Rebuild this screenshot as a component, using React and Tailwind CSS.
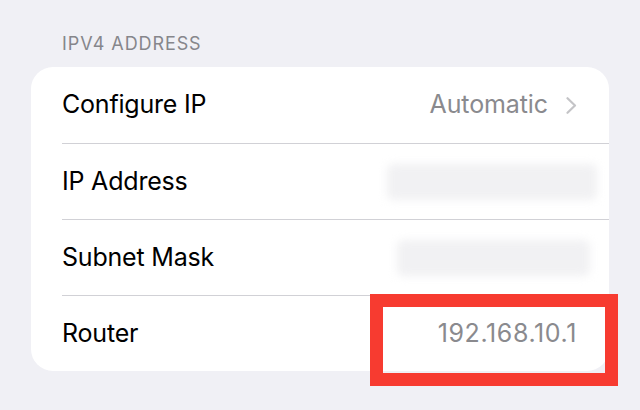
const rows = [
    { label: 'Configure IP', value: 'Automatic', chevron: true },
    { label: 'IP Address', blur: 'w-[210px] mr-[-20px]' },
    { label: 'Subnet Mask', blur: 'w-[193px] mr-[-13px]' },
    { label: 'Router', value: '192.168.10.1', highlight: true },
];

export default function App() {
    return (
        <div className="w-[640px] h-[410px] bg-[#f0f0f5] pt-[35px] pl-[31px] pr-[31px] overflow-hidden" style={{ fontFamily: 'Inter, "Liberation Sans", sans-serif' }}>
            <div className="pl-[31px] text-[18px] text-[#86868b] leading-none tracking-[0.9px] h-[32px]">IPV4 ADDRESS</div>
            <div className="bg-white rounded-[22px] pl-[31px]">
                {rows.map((row, i) => (
                    <div key={row.label} className={`relative h-[76px] flex items-center justify-between pr-[32px] ${i > 0 ? 'border-t border-[#d1d1d6]' : ''}`}>
                        <span className="text-[25px] text-black tracking-[-0.2px]">{row.label}</span>
                        {row.value && (
                            <span className={`flex items-center text-[25px] text-[#8a8a8e] ${row.highlight ? 'tracking-[0.6px]' : 'tracking-[-0.1px]'}`}>
                                {row.value}
                                {row.chevron && (
                                    <svg width="11" height="17" viewBox="0 0 11 17" className="ml-[18px]" fill="none">
                                        <path d="M1.5 1.2 L9 8.5 L1.5 15.8" stroke="#c4c4c7" strokeWidth="2.2" strokeLinecap="round" strokeLinejoin="round" />
                                    </svg>
                                )}
                            </span>
                        )}
                        {row.blur && (
                            <div className={`h-[36px] ${row.blur} bg-[#f1f1f3] rounded-md blur-[4px]`} />
                        )}
                        {row.highlight && (
                            <div className="absolute left-[308px] top-[-2px] w-[248px] h-[92px] border-[13px] border-[#f73b30]" />
                        )}
                    </div>
                ))}
            </div>
        </div>
    );
}
